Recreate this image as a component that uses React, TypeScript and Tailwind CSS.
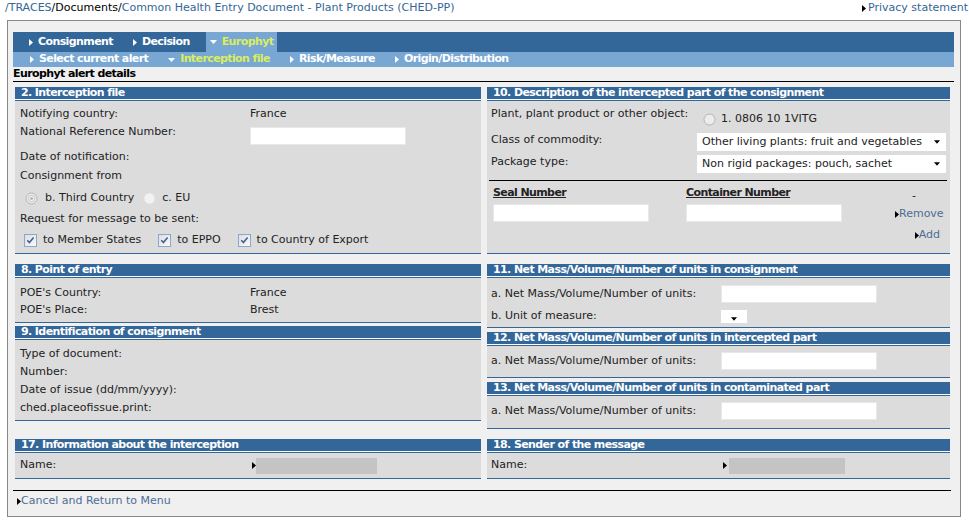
function RightTri({ className = "" }: { className?: string }) {
  return (
    <svg width="4" height="7" viewBox="0 0 4 7" className={`shrink-0 ${className}`}>
      <path d="M0 0L4 3.5L0 7Z" fill="currentColor" />
    </svg>
  );
}

function DownTri({ className = "", w = 7, h = 4 }: { className?: string; w?: number; h?: number }) {
  return (
    <svg width={w} height={h} viewBox="0 0 7 4" className={`shrink-0 ${className}`}>
      <path d="M0 0H7L3.5 4Z" fill="currentColor" />
    </svg>
  );
}

function Checkbox() {
  return (
    <svg width="13" height="13" viewBox="0 0 13 13" className="shrink-0">
      <defs>
        <linearGradient id="cbg" x1="0" y1="0" x2="1" y2="1">
          <stop offset="0" stopColor="#d9dee6" />
          <stop offset="1" stopColor="#fafafa" />
        </linearGradient>
      </defs>
      <rect x="0.5" y="0.5" width="12" height="12" fill="url(#cbg)" stroke="#8fa6c4" />
      <path d="M3.3 6.3L5.4 8.6L9.6 3.4" fill="none" stroke="#4b5f8c" strokeWidth="1.6" />
    </svg>
  );
}

function Radio({ checked = false, faint = false }: { checked?: boolean; faint?: boolean }) {
  return (
    <svg width="13" height="13" viewBox="0 0 13 13" className="shrink-0">
      <circle
        cx="6.5"
        cy="6.5"
        r="5.5"
        fill={faint ? "#f2f2f2" : "#ececec"}
        stroke={faint ? "#e2e2e2" : "#b3b3b3"}
      />
      {checked && <circle cx="6.5" cy="6.5" r="3.2" fill="#f4f4f4" stroke="#c4c4c4" />}
      {checked && <circle cx="6.5" cy="6.5" r="1.6" fill="#b8b8b8" />}
    </svg>
  );
}

function Field({ className = "" }: { className?: string }) {
  return <div className={`h-[18px] w-[156px] shrink-0 border border-[#e8e8e8] bg-white ${className}`} />;
}

function Select({ text, className = "" }: { text: string; className?: string }) {
  return (
    <div className={`flex h-[18px] w-[249px] shrink-0 items-center justify-between bg-white pl-[5px] pr-[6px] ${className}`}>
      <span className="whitespace-nowrap">{text}</span>
      <DownTri w={6} h={4} className="text-black" />
    </div>
  );
}

function Panel({ title, className = "", children }: { title: string; className?: string; children: React.ReactNode }) {
  return (
    <div className={className}>
      <div className="box-content h-[12px] border-b border-white bg-[#336699] pl-[6px] text-[11px] leading-[12px] font-bold tracking-[-0.6px] whitespace-nowrap text-white">
        {title}
      </div>
      <div className="border-y border-[#336699] bg-[#dcdcdc]">{children}</div>
    </div>
  );
}

function Tab({ label, open = false, active = false }: { label: string; open?: boolean; active?: boolean }) {
  return (
    <div className={`flex items-center gap-[5px] px-[4px] ${active ? "bg-[#78a7d3]" : ""}`}>
      {open ? <DownTri className="text-white" /> : <RightTri className="text-white" />}
      <span className={open ? "text-[#d9ee5c]" : "text-white"}>{label}</span>
    </div>
  );
}

export default function App() {
  return (
    <div className="h-[524px] w-[969px] overflow-hidden bg-white font-['DejaVu_Sans',Verdana,sans-serif] text-[11px] text-[#222]">
      {/* breadcrumb */}
      <div className="flex h-[20px] items-start justify-between pl-[5px] leading-[16px] whitespace-nowrap">
        <div>
          <span className="text-[#336699]">/TRACES</span>
          <span className="text-black">/Documents/</span>
          <span className="text-[#336699]">Common Health Entry Document - Plant Products (CHED-PP)</span>
        </div>
        <div className="mr-[1px] flex items-center gap-[2px] text-[#336699]">
          <RightTri className="text-black" />
          <span>Privacy statement</span>
        </div>
      </div>

      <div className="ml-[7px] w-[954px] border border-[#888] bg-[#f0f0f0] pt-[11px] pr-[6px] pb-[5px] pl-[5px]">
        {/* nav */}
        <div className="flex h-[20px] items-stretch gap-[12px] bg-[#336699] pl-[12px] font-bold tracking-[-0.6px]">
          <Tab label="Consignment" />
          <Tab label="Decision" />
          <Tab label="Europhyt" open active />
        </div>
        <div className="flex h-[15px] items-stretch gap-[12px] bg-[#78a7d3] pl-[13px] font-bold tracking-[-0.6px]">
          <Tab label="Select current alert" />
          <Tab label="Interception file" open />
          <Tab label="Risk/Measure" />
          <Tab label="Origin/Distribution" />
        </div>
        <div className="h-[14px] leading-[14px] font-bold tracking-[-0.6px] text-black">Europhyt alert details</div>
        <div className="h-px bg-black" />

        <div className="mt-[5px] grid grid-cols-[466px_463px] gap-x-[6px] gap-y-[10px] pl-[2px]">
          {/* row A */}
          <Panel title="2. Interception file">
            <div className="pt-[3px] pl-[5px]">
              <div className="flex h-[20px] items-center">
                <span className="w-[230px] shrink-0">Notifying country:</span>
                <span>France</span>
              </div>
              <div className="flex h-[23px] items-start">
                <span className="w-[230px] shrink-0 leading-[16px]">National Reference Number:</span>
                <Field className="mt-[3px]" />
              </div>
              <div className="flex h-[20px] items-center">Date of notification:</div>
              <div className="flex h-[19px] items-center">Consignment from</div>
              <div className="flex h-[25px] items-center pl-[5px]">
                <Radio checked />
                <span className="ml-[7px]">b. Third Country</span>
                <span className="ml-[9px]">
                  <Radio faint />
                </span>
                <span className="ml-[6px]">c. EU</span>
              </div>
              <div className="flex h-[16px] items-center">Request for message to be sent:</div>
              <div className="flex h-[26px] items-center pl-[4px]">
                <Checkbox />
                <span className="ml-[6px]">to Member States</span>
                <span className="ml-[17px] flex">
                  <Checkbox />
                </span>
                <span className="ml-[6px]">to EPPO</span>
                <span className="ml-[17px] flex">
                  <Checkbox />
                </span>
                <span className="ml-[6px]">to Country of Export</span>
              </div>
            </div>
          </Panel>

          <Panel title="10. Description of the intercepted part of the consignment">
            <div className="pt-[3px]">
              <div className="flex h-[26px] items-start pl-[4px]">
                <span className="w-[206px] shrink-0 leading-[20px]">Plant, plant product or other object:</span>
                <div className="mt-[8px] flex h-[14px] items-center pl-[6px]">
                  <Radio />
                  <span className="ml-[5px]">1. 0806 10 1VITG</span>
                </div>
              </div>
              <div className="flex h-[22px] items-start pl-[4px]">
                <span className="w-[206px] shrink-0 leading-[20px]">Class of commodity:</span>
                <Select className="mt-[3px]" text="Other living plants: fruit and vegetables" />
              </div>
              <div className="flex h-[24px] items-start pl-[4px]">
                <span className="w-[206px] shrink-0 leading-[20px]">Package type:</span>
                <Select className="mt-[3px]" text="Non rigid packages: pouch, sachet" />
              </div>
              <div className="mt-[4px] mr-[3px] ml-[2px] h-px bg-black" />
              <div className="mt-[3px] flex h-[18px] items-center pl-[6px] font-bold">
                <span className="w-[193px] shrink-0 tracking-[-0.6px] underline">Seal Number</span>
                <span className="w-[207px] shrink-0 tracking-[-0.6px] underline">Container Number</span>
                <span className="ml-[19px] self-end leading-[12px] font-normal">-</span>
              </div>
              <div className="mt-[2px] flex h-[18px] items-end pl-[6px]">
                <div className="w-[193px] shrink-0">
                  <Field />
                </div>
                <div className="w-[207px] shrink-0">
                  <Field />
                </div>
                <div className="ml-[2px] flex items-center leading-[16px] text-[#4d6d94]">
                  <RightTri className="text-black" />
                  <span>Remove</span>
                </div>
              </div>
              <div className="mt-[5px] flex h-[16px] items-center justify-end pr-[10px] text-[#4d6d94]">
                <RightTri className="text-black" />
                <span>Add</span>
              </div>
              <div className="h-[10px]" />
            </div>
          </Panel>

          {/* row B */}
          <div>
            <Panel title="8. Point of entry">
              <div className="pt-[6px] pb-[3px] pl-[5px]">
                <div className="flex h-[18px] items-center">
                  <span className="w-[230px] shrink-0">POE's Country:</span>
                  <span>France</span>
                </div>
                <div className="flex h-[17px] items-center">
                  <span className="w-[230px] shrink-0">POE's Place:</span>
                  <span>Brest</span>
                </div>
              </div>
            </Panel>
            <Panel title="9. Identification of consignment" className="mt-[3px]">
              <div className="pt-[5px] pb-[3px] pl-[5px]">
                <div className="flex h-[18px] items-center">Type of document:</div>
                <div className="flex h-[18px] items-center">Number:</div>
                <div className="flex h-[18px] items-center">Date of issue (dd/mm/yyyy):</div>
                <div className="flex h-[18px] items-center">ched.placeofissue.print:</div>
              </div>
            </Panel>
          </div>

          <div>
            <Panel title="11. Net Mass/Volume/Number of units in consignment">
              <div className="pt-[6px] pb-[1px] pl-[4px]">
                <div className="flex h-[20px] items-center">
                  <span className="w-[230px] shrink-0">a. Net Mass/Volume/Number of units:</span>
                  <Field />
                </div>
                <div className="mt-[2px] flex h-[20px] items-center">
                  <span className="w-[230px] shrink-0">b. Unit of measure:</span>
                  <div className="flex h-[13px] w-[26px] items-end justify-center bg-white pb-[2px]">
                    <DownTri w={6} h={4} className="text-black" />
                  </div>
                </div>
              </div>
            </Panel>
            <Panel title="12. Net Mass/Volume/Number of units in intercepted part" className="mt-[4px]">
              <div className="pt-[5px] pb-[6px] pl-[4px]">
                <div className="flex h-[20px] items-center">
                  <span className="w-[230px] shrink-0">a. Net Mass/Volume/Number of units:</span>
                  <Field />
                </div>
              </div>
            </Panel>
            <Panel title="13. Net Mass/Volume/Number of units in contaminated part" className="mt-[4px]">
              <div className="pt-[5px] pb-[7px] pl-[4px]">
                <div className="flex h-[20px] items-center">
                  <span className="w-[230px] shrink-0">a. Net Mass/Volume/Number of units:</span>
                  <Field />
                </div>
              </div>
            </Panel>
          </div>

          {/* row C */}
          <Panel title="17. Information about the interception">
            <div className="flex h-[25px] items-center pl-[5px]">
              <span className="w-[230px] shrink-0">Name:</span>
              <RightTri className="ml-[2px] text-black" />
              <div className="h-[16px] w-[121px] bg-[#c4c4c4]" />
            </div>
          </Panel>
          <Panel title="18. Sender of the message">
            <div className="flex h-[25px] items-center pl-[4px]">
              <span className="w-[230px] shrink-0">Name:</span>
              <RightTri className="ml-[2px] text-black" />
              <div className="ml-[2px] h-[16px] w-[116px] bg-[#c4c4c4]" />
            </div>
          </Panel>
        </div>

        <div className="mt-[11px] mr-[3px] h-px bg-black" />
        <div className="flex h-[20px] items-center pl-[4px] text-[#4d6d94]">
          <RightTri className="text-black" />
          <span>Cancel and Return to Menu</span>
        </div>
      </div>
    </div>
  );
}
